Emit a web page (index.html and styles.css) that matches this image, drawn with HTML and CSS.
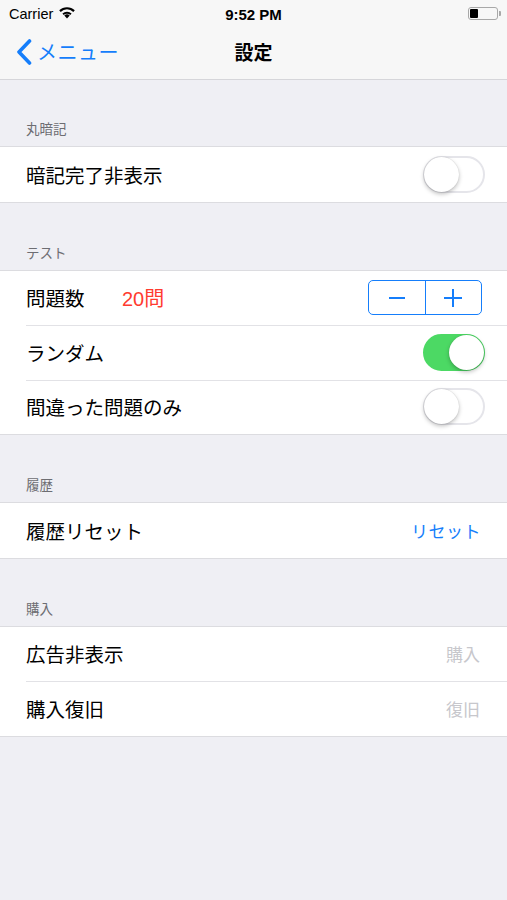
FILE: index.html
```html
<!DOCTYPE html>
<html>
<head>
    <meta http-equiv="Content-Type" content="text/html; charset=utf-8" />
    <title>設定</title>
    <link rel="stylesheet" href="styles.css">
</head>
<body>
<div class="status">
    <div class="carrier">Carrier
        <svg class="wifi" width="18" height="13" viewBox="0 0 18 13">
            <path d="M9 12.5 L6.3 9.6 A3.9 3.9 0 0 1 11.7 9.6 Z" fill="#000"/>
            <path d="M4.4 7.6 A6.6 6.6 0 0 1 13.6 7.6 L12.3 9 A4.7 4.7 0 0 0 5.7 9 Z" fill="#000"/>
            <path d="M1.2 4.3 A11.2 11.2 0 0 1 16.8 4.3 L15.3 5.9 A9.1 9.1 0 0 0 2.7 5.9 Z" fill="#000"/>
        </svg>
    </div>
    <div class="time">9:52 PM</div>
    <div class="battery"><div class="level"></div></div>
</div>
<div class="navbar">
    <div class="back">
        <svg width="16" height="26" viewBox="0 0 16 26">
            <path d="M13.5 2 L3 13 L13.5 24" fill="none" stroke="#157efb" stroke-width="3.6" stroke-linecap="round" stroke-linejoin="round"/>
        </svg>
        <span>メニュー</span>
    </div>
    <div class="title">設定</div>
</div>

<div class="header first">丸暗記</div>
<div class="group">
    <div class="cell">
        <span class="label">暗記完了非表示</span>
        <div class="switch"><div class="knob"></div></div>
    </div>
</div>

<div class="header">テスト</div>
<div class="group">
    <div class="cell">
        <span class="label">問題数</span>
        <span class="count">20問</span>
        <div class="stepper">
            <div class="step">
                <svg width="20" height="20" viewBox="0 0 20 20"><path d="M2 10 H18" stroke="#157efb" stroke-width="2"/></svg>
            </div>
            <div class="step">
                <svg width="20" height="20" viewBox="0 0 20 20"><path d="M1 10 H19 M10 1 V19" stroke="#157efb" stroke-width="2"/></svg>
            </div>
        </div>
    </div>
    <div class="cell">
        <span class="label">ランダム</span>
        <div class="switch on"><div class="knob"></div></div>
    </div>
    <div class="cell">
        <span class="label">間違った問題のみ</span>
        <div class="switch"><div class="knob"></div></div>
    </div>
</div>

<div class="header">履歴</div>
<div class="group">
    <div class="cell">
        <span class="label">履歴リセット</span>
        <span class="action">リセット</span>
    </div>
</div>

<div class="header">購入</div>
<div class="group">
    <div class="cell">
        <span class="label">広告非表示</span>
        <span class="disabled">購入</span>
    </div>
    <div class="cell">
        <span class="label">購入復旧</span>
        <span class="disabled">復旧</span>
    </div>
</div>

</body>
</html>
```

FILE: styles.css
```css
*{ margin: 0; padding: 0; box-sizing: border-box;}
body{ background: #efeff4; font-family: "Noto Sans CJK JP", "Liberation Sans", sans-serif; color: #000; width: 507px; min-height: 900px;}

.status{ height: 27px; background: #f7f7f7; display: flex; align-items: center; justify-content: space-between; padding: 0 6px 0 9px; position: relative; font-family: "Liberation Sans", sans-serif;}
.carrier{ font-size: 14.5px; display: flex; align-items: center; gap: 5px; width: 120px;}
.wifi{ margin-top: -2px;}
.time{ font-size: 15px; font-weight: bold; position: absolute; left: 0; right: 0; text-align: center; top: 6px;}
.battery{ width: 30px; height: 13px; border: 1px solid #a8a8a8; border-radius: 3px; padding: 1px; position: relative; margin-right: 3px;}
.battery:after{ content: ""; position: absolute; right: -4px; top: 3px; width: 2px; height: 5px; background: #a8a8a8; border-radius: 0 1px 1px 0;}
.battery .level{ width: 8px; height: 100%; background: #000; border-radius: 1px;}

.navbar{ height: 53px; background: #f7f7f7; border-bottom: 1px solid #d6d6da; display: flex; align-items: center; justify-content: center; position: relative; padding-bottom: 3px;}
.back{ position: absolute; left: 16px; top: 10px; display: flex; align-items: center; gap: 5px; color: #157efb; font-size: 20px;}
.back span{ letter-spacing: 0.5px;}
.title{ font-size: 19px; font-weight: bold;}

.header{ font-size: 13.5px; color: #6d6d72; padding: 39px 26px 7px; line-height: 21px;}
.header.first{ padding-top: 38px;}
.group{ background: #fff; border-top: 1px solid #dcdce0; border-bottom: 1px solid #dcdce0;}
.cell{ height: 54.5px; display: flex; align-items: center; padding: 0 22px 0 26px; position: relative;}
.cell + .cell:before{ content: ""; position: absolute; left: 26px; right: 0; top: 0; border-top: 1px solid #e2e2e6;}
.label{ font-size: 19.5px; flex: 1; white-space: nowrap;}
.count{ color: #ff3b30; font-size: 20px; position: absolute; left: 122px; font-family: "Liberation Sans", "Noto Sans CJK JP", sans-serif;}

.switch{ width: 62px; height: 37px; border-radius: 19px; background: #fff; border: 2px solid #e5e5ea; position: relative;}
.switch .knob{ width: 35px; height: 35px; border-radius: 50%; background: #fff; position: absolute; left: -1px; top: -1px; box-shadow: 0 2px 4px rgba(0,0,0,0.25), 0 0 1px rgba(0,0,0,0.2);}
.switch.on{ background: #4cd964; border-color: #4cd964;}
.switch.on .knob{ left: auto; right: -1px;}

.stepper{ display: flex; width: 114px; height: 35px; border: 1.5px solid #157efb; border-radius: 5px; margin-right: 3px;}
.step{ flex: 1; display: flex; align-items: center; justify-content: center;}
.step + .step{ border-left: 1.5px solid #157efb;}

.action{ color: #157efb; font-size: 17px; letter-spacing: 0.5px; margin-right: 4px;}
.disabled{ color: #c7c7cc; font-size: 17px; margin-right: 5px;}
```
